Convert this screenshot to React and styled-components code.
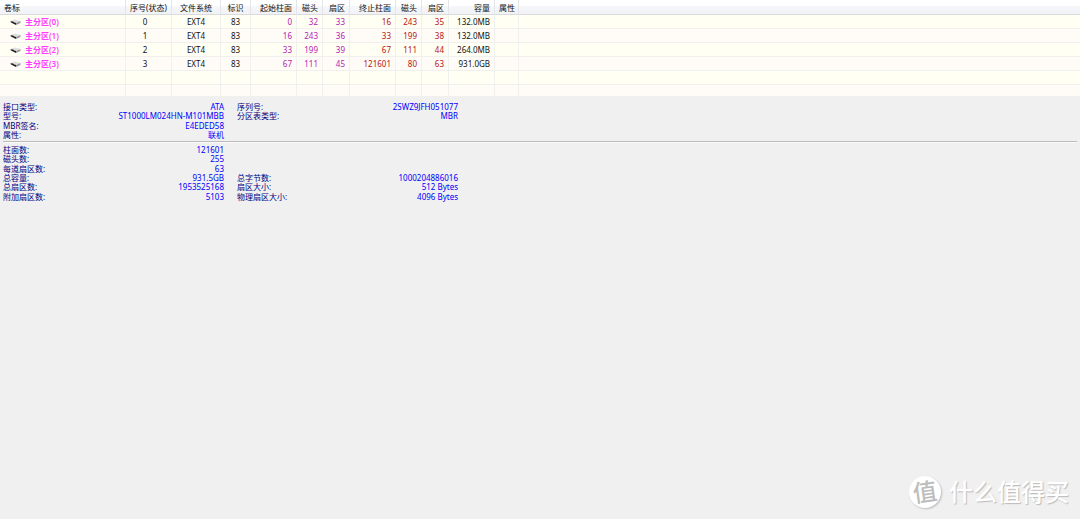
import styled, { createGlobalStyle } from "styled-components";

const columns = [
  { title: "卷标", width: 126, align: "left" },
  { title: "序号(状态)", width: 46, align: "center", indent: 11 },
  { title: "文件系统", width: 49, align: "center" },
  { title: "标识", width: 30, align: "center" },
  { title: "起始柱面", width: 46, align: "right", color: "#b51ab5" },
  { title: "磁头", width: 26, align: "right", color: "#b51ab5" },
  { title: "扇区", width: 27, align: "right", color: "#b51ab5" },
  { title: "终止柱面", width: 46, align: "right", color: "#b81414" },
  { title: "磁头", width: 26, align: "right", color: "#b81414" },
  { title: "扇区", width: 27, align: "right", color: "#b81414" },
  { title: "容量", width: 46, align: "right" },
  { title: "属性", width: 24, align: "right" },
];

const partitions = [
  ["主分区(0)", "0", "EXT4", "83", "0", "32", "33", "16", "243", "35", "132.0MB", ""],
  ["主分区(1)", "1", "EXT4", "83", "16", "243", "36", "33", "199", "38", "132.0MB", ""],
  ["主分区(2)", "2", "EXT4", "83", "33", "199", "39", "67", "111", "44", "264.0MB", ""],
  ["主分区(3)", "3", "EXT4", "83", "67", "111", "45", "121601", "80", "63", "931.0GB", ""],
];

const emptyRows = [14, 12];

const deviceInfo = [
  [["接口类型:", "ATA"], ["序列号:", "2SWZ9JFH051077"]],
  [["型号:", "ST1000LM024HN-M101MBB"], ["分区表类型:", "MBR"]],
  [["MBR签名:", "E4EDED58"]],
  [["属性:", "联机"]],
];

const geometryInfo = [
  [["柱面数:", "121601"]],
  [["磁头数:", "255"]],
  [["每道扇区数:", "63"]],
  [["总容量:", "931.5GB"], ["总字节数:", "1000204886016"]],
  [["总扇区数:", "1953525168"], ["扇区大小:", "512 Bytes"]],
  [["附加扇区数:", "5103"], ["物理扇区大小:", "4096 Bytes"]],
];

const DiskIcon = () => (
  <DiskSvg viewBox="0 0 22 12" aria-hidden="true">
    <path d="M1 4 L10 1 L21 4 L12 8 Z" fill="#dedede" />
    <path d="M1 4 L12 8 L12 12 L2 7 Z" fill="#1d1d1d" />
    <path d="M12 8 L21 4 L21 8 L12 12 Z" fill="#999" />
    <path d="M2 4 L8 5 L5 6 Z" fill="#555" />
  </DiskSvg>
);

const InfoSection = ({ rows, height }) => (
  <InfoList $height={height}>
    {rows.map((pairs) => (
      <InfoRow key={pairs[0][0]}>
        {pairs.map(([label, value]) => (
          <InfoPair key={label}>
            <dt>{label}</dt>
            <InfoValue>{value}</InfoValue>
          </InfoPair>
        ))}
      </InfoRow>
    ))}
  </InfoList>
);

const App = () => {
  return (
    <Page>
      <GlobalStyle />
      <Table>
        <colgroup>
          {columns.map((col, i) => (
            <Col key={i} $width={col.width} />
          ))}
          <col />
        </colgroup>
        <thead>
          <tr>
            {columns.map((col, i) => (
              <HeadCell key={i} $align={col.align}>
                {col.title}
              </HeadCell>
            ))}
            <HeadCell as="td" />
          </tr>
        </thead>
        <tbody>
          {partitions.map((row) => (
            <Row key={row[0]} $height={14}>
              {row.map((value, i) => (
                <Cell
                  key={i}
                  $align={columns[i].align}
                  $color={columns[i].color}
                  $indent={columns[i].indent}
                >
                  {i === 0 ? (
                    <Volume>
                      <DiskIcon />
                      {value}
                    </Volume>
                  ) : (
                    value
                  )}
                </Cell>
              ))}
              <Cell />
            </Row>
          ))}
          {emptyRows.map((height, n) => (
            <Row key={n} $height={height}>
              {columns.map((col, i) => (
                <Cell key={i} />
              ))}
              <Cell />
            </Row>
          ))}
        </tbody>
      </Table>
      <Details>
        <InfoSection rows={deviceInfo} height={37} />
        <Divider />
        <InfoSection rows={geometryInfo} height={56} />
      </Details>
      <Watermark>
        <Seal>
          <SealGlyph>值</SealGlyph>
        </Seal>
        <span>什么值得买</span>
      </Watermark>
    </Page>
  );
};

export default App;

const GlobalStyle = createGlobalStyle`
  * {
    box-sizing: border-box;
  }

  body {
    margin: 0;
    background: #f0f0f0;
    font-family: "Noto Sans", "Noto Sans CJK SC", sans-serif;
    font-size: 8px;
    color: #111;
  }
`;

const Page = styled.main`
  position: relative;
  min-height: 100vh;
`;

const Table = styled.table`
  width: 100%;
  table-layout: fixed;
  border-collapse: separate;
  border-spacing: 0;
  line-height: 13px;
`;

const Col = styled.col`
  width: ${(p) => p.$width}px;
`;

const HeadCell = styled.th`
  height: 15px;
  padding: 0 4px;
  font-weight: 400;
  text-align: ${(p) => p.$align};
  white-space: nowrap;
  background: linear-gradient(#fff 6px, #f6f7f9 6px, #f2f3f6);
  border-right: 1px solid #e3e5e9;
  border-bottom: 1px solid #d9dbdf;

  &:last-child {
    border-right: none;
  }
`;

const Row = styled.tr`
  height: ${(p) => p.$height}px;
  background: #fffff3;

  &:nth-child(even) {
    background: #fffcf8;
  }
`;

const Cell = styled.td`
  padding: 0 ${(p) => p.$indent || 4}px 0 4px;
  text-align: ${(p) => p.$align};
  color: ${(p) => p.$color || "#111"};
  white-space: nowrap;
  border-right: 1px solid #f0f0ee;
  border-bottom: 1px solid #f0f0ee;

  &:last-child {
    border-right: none;
  }
`;

const Volume = styled.span`
  display: flex;
  align-items: center;
  gap: 4px;
  padding-left: 6px;
  font-weight: 600;
  color: #ff3cff;
`;

const DiskSvg = styled.svg`
  width: 11px;
  height: 6px;
`;

const Details = styled.section`
  padding: 5px 3px;
  line-height: 9px;
`;

const InfoList = styled.dl`
  display: grid;
  grid-auto-rows: 1fr;
  min-height: ${(p) => p.$height}px;
  margin: 0;
`;

const InfoRow = styled.div`
  display: grid;
  grid-template-columns: 221px 221px;
  column-gap: 13px;
`;

const InfoPair = styled.div`
  display: flex;
  justify-content: space-between;
  color: #000080;
`;

const InfoValue = styled.dd`
  margin: 0;
  color: #0000ff;
`;

const Divider = styled.hr`
  margin: 2px 0;
  border: none;
  border-top: 1px solid #bcbcbc;
  border-bottom: 1px solid #fafafa;
`;

const Watermark = styled.div`
  position: absolute;
  right: 11px;
  bottom: 11px;
  display: flex;
  align-items: center;
  gap: 8px;
  font-size: 24px;
  font-weight: 500;
  line-height: 32px;
  color: #fff;
  text-shadow: 1px 1px 1px #bbb;
`;

const Seal = styled.span`
  display: flex;
  align-items: center;
  justify-content: center;
  width: 32px;
  height: 32px;
  border-radius: 50%;
  background: #fff;
  box-shadow: 1px 1px 2px #bbb;
  color: #bdbdbd;
  text-shadow: none;
`;

const SealGlyph = styled.span`
  transform: rotate(-8deg);
`;
